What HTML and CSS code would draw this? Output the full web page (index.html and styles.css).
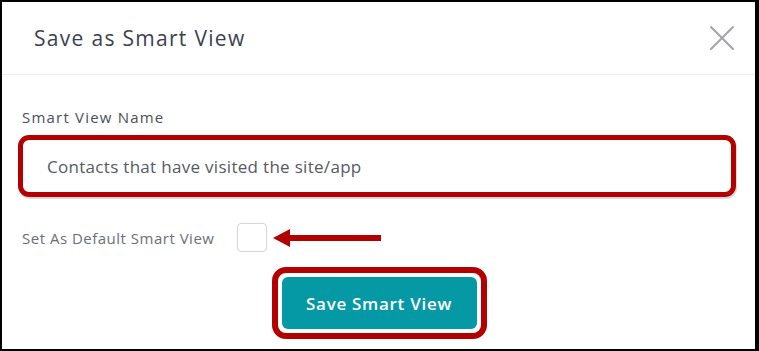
FILE: index.html
```html
<!DOCTYPE html>
<html lang="en">
<head>
	<meta charset="UTF-8">
	<meta name="viewport" content="width=device-width, initial-scale=1.0">
	<title>Save as Smart View</title>
	<link rel="stylesheet" href="styles.css">
</head>
<body>
	<div class="modal">
		<div class="modal-header">
			<div class="modal-title">Save as Smart View</div>
			<button class="close-btn" aria-label="Close">
				<svg width="26" height="26" viewBox="0 0 26 26">
					<path d="M2 2 L24 24 M24 2 L2 24" stroke="#a3a3a8" stroke-width="2" stroke-linecap="round" fill="none"/>
				</svg>
			</button>
		</div>
		<div class="modal-body">
			<label class="field-label">Smart View Name</label>
			<div class="highlight input-highlight">
				<div class="text-input">Contacts that have visited the site/app</div>
			</div>
			<div class="default-row">
				<span class="default-label">Set As Default Smart View</span>
				<span class="checkbox"></span>
				<svg class="arrow" width="108" height="18" viewBox="0 0 108 18">
					<polygon points="0,9 17,0 17,18" fill="#b30000"/>
					<rect x="15" y="6" width="93" height="6" fill="#b30000"/>
				</svg>
			</div>
			<div class="footer">
				<div class="highlight button-highlight">
					<button class="save-btn">Save Smart View</button>
				</div>
			</div>
		</div>
	</div>
</body>
</html>
```

FILE: styles.css
```css
:root {
    --annot: #b30000;
    --teal: #0599a6;
}

body {
    margin: 0;
    font-family: "Open Sans", Lato, sans-serif;
}

.modal {
    box-sizing: border-box;
    width: 759px;
    height: 351px;
    border-style: solid;
    border-color: #000;
    border-width: 2px 4px 2px 2px;
    background: #fff;
}

.modal-header {
    height: 72px;
    border-bottom: 1px solid #ececec;
    display: flex;
    align-items: center;
    justify-content: space-between;
    padding: 0 20px 0 32px;
}

.modal-title {
    font-size: 21px;
    color: #3b4150;
    letter-spacing: 1.3px;
}

.close-btn {
    border: none;
    background: none;
    padding: 0;
    display: flex;
    margin-top: -1px;
}

.modal-body {
    padding: 0 19px 0 16px;
}

.field-label {
    display: block;
    margin-top: 32px;
    margin-left: 4px;
    font-size: 15px;
    letter-spacing: 1.2px;
    color: #4a4f5c;
}

.highlight {
    border: 5px solid var(--annot);
    box-sizing: border-box;
}

.input-highlight {
    margin-top: 8px;
    height: 62px;
    border-radius: 11px;
    box-shadow: 1px 2px 0 #d6d9de;
    display: flex;
    align-items: center;
}

.text-input {
    padding-left: 24px;
    font-size: 17px;
    letter-spacing: 0.3px;
    color: #555a64;
}

.default-row {
    display: flex;
    align-items: center;
    margin-top: 26px;
    padding-left: 4px;
}

.default-label {
    font-size: 15px;
    letter-spacing: 0.5px;
    color: #6b6f78;
}

.checkbox {
    width: 28px;
    height: 27px;
    border: 1px solid #d4d6da;
    border-radius: 4px;
    margin-left: 23px;
}

.arrow {
    margin-left: 6px;
}

.footer {
    display: flex;
    justify-content: center;
    margin-top: 15px;
}

.button-highlight {
    width: 215px;
    height: 72px;
    border-width: 6px;
    border-radius: 14px;
    padding: 4px 4px;
    display: flex;
    margin-left: 4px;
}

.save-btn {
    flex: 1;
    border: none;
    border-radius: 6px;
    background: var(--teal);
    color: #fff;
    font-family: "Open Sans", Lato, sans-serif;
    font-size: 17px;
    font-weight: 600;
    letter-spacing: 0.7px;
}
```
